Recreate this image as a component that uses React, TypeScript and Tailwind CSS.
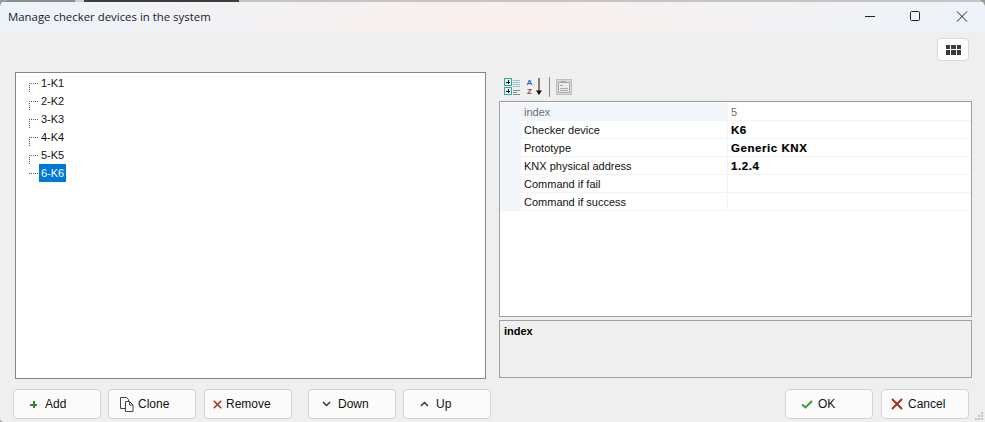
import type { ReactNode } from 'react';

const DEVICES = ['1-K1', '2-K2', '3-K3', '4-K4', '5-K5', '6-K6'];

const PROPS = [
  { name: 'index', value: '5', dim: true },
  { name: 'Checker device', value: 'K6' },
  { name: 'Prototype', value: 'Generic KNX' },
  { name: 'KNX physical address', value: '1.2.4' },
  { name: 'Command if fail', value: '' },
  { name: 'Command if success', value: '' },
];

function TreeLine({ last }: { last: boolean }) {
  return (
    <svg width="10" height="18" className="shrink-0" shapeRendering="crispEdges">
      <line x1="0.5" y1={9} x2="0.5" y2={last ? 9 : 18} stroke="#555" strokeDasharray="1 1" />
      <line x1="0" y1="9.5" x2="9" y2="9.5" stroke="#555" strokeDasharray="1 1" />
    </svg>
  );
}

function ActionButton({
  icon,
  label,
  className,
}: {
  icon: ReactNode;
  label: string;
  className: string;
}) {
  return (
    <button className={`flex h-[30px] w-[88px] shrink-0 items-center rounded-[4px] border border-[#d4d4d4] bg-[#fbfbfb] text-[12px] text-[#111] ${className}`}>
      {icon}
      <span>{label}</span>
    </button>
  );
}

function CrossIcon({ size }: { size: number }) {
  return (
    <svg width={size} height={size} viewBox="0 0 12 12">
      <path d="M1 1l10 10M11 1L1 11" stroke="#a5301c" strokeWidth="2" fill="none" />
    </svg>
  );
}

function CategoryIcon() {
  return (
    <svg width="17" height="18" viewBox="0 0 17 18" shapeRendering="crispEdges">
      <rect x="0.5" y="0.5" width="7" height="7" fill="#e8f7f5" stroke="#35a79c" />
      <rect x="0.5" y="9.5" width="7" height="7" fill="#e8f7f5" stroke="#35a79c" />
      <path d="M2 4h4M4 2v4M2 13h4M4 11v4" stroke="#111" fill="none" />
      <path d="M9 2h7M9 4h7M9 6h7M9 8h7" stroke="#8fc4d6" fill="none" />
      <path d="M9 12h7M9 14h4M9 16h7" stroke="#7f8f98" fill="none" />
    </svg>
  );
}

function SortIcon() {
  return (
    <svg width="18" height="19" viewBox="0 0 18 19" fontFamily="'Liberation Sans', sans-serif" fontWeight="700" fontSize="8">
      <text x="0.5" y="8" fill="#2a63c4">A</text>
      <text x="1" y="17" fill="#8a4a55">Z</text>
      <path d="M13 1v14" stroke="#111" strokeWidth="1" fill="none" />
      <path d="M10 13.500h6L13 18z" fill="#111" />
    </svg>
  );
}

function PagesIcon() {
  return (
    <svg width="16" height="16" viewBox="0 0 16 16" shapeRendering="crispEdges">
      <rect x="0.5" y="0.5" width="15" height="15" fill="#d9d9d9" stroke="#bdbdbd" />
      <rect x="2.5" y="3.5" width="11" height="10" fill="#ececec" stroke="#a8a8a8" />
      <path d="M4 6h3M4 9h8M4 11h8M5 2h5" stroke="#a8a8a8" fill="none" />
    </svg>
  );
}

export default function App() {
  return (
    <div className="h-[422px] w-[985px] bg-[#9a9a9a]">
      <div className="relative flex h-[422px] w-[985px] flex-col overflow-hidden rounded-t-[8px] rounded-bl-[4px] bg-[#efefef] font-['Liberation_Sans',sans-serif] text-[11px] text-[#111]">
        {/* top edge with what is behind the window */}
        <div className="flex h-[2px] shrink-0">
          <div className="w-[75px] bg-[#8c8c8c]" />
          <div className="w-[9px] bg-[#d0d0d0]" />
          <div className="w-[155px] bg-[#3d3d3d]" />
          <div className="flex-1 bg-[#c4c4c4]" />
        </div>

        <div className="flex h-[30px] shrink-0 items-center justify-between bg-gradient-to-r from-[#ecf3fa] via-[#f9efec] to-[#edf3f9] pl-[8px]">
          <span className="font-['Open_Sans',sans-serif] text-[11.4px] leading-none text-[#1a1a1a]">
            Manage checker devices in the system
          </span>
          <div className="flex items-center">
            <svg width="46" height="30" viewBox="0 0 46 30" className="shrink-0">
              <path d="M18 14.500h10" stroke="#222" fill="none" />
            </svg>
            <svg width="46" height="30" viewBox="0 0 46 30" className="shrink-0">
              <rect x="17.5" y="9.5" width="9" height="9" rx="1" stroke="#222" fill="none" />
            </svg>
            <svg width="46" height="30" viewBox="0 0 46 30" className="shrink-0">
              <path d="M18 9.500l10 10M28 9.500l-10 10" stroke="#222" fill="none" />
            </svg>
          </div>
        </div>

        <div className="flex h-[40px] shrink-0 justify-end pr-[16px] pt-[6px]">
          <button className="flex h-[23px] w-[32px] items-center justify-center rounded-[4px] border border-[#d8d8d8] bg-white">
            <svg width="15" height="10" viewBox="0 0 15 10" shapeRendering="crispEdges">
              <path d="M0 0h4v4H0zM5 0h5v4H5zM11 0h4v4h-4zM0 5h4v5H0zM5 5h5v5H5zM11 5h4v5h-4z" fill="#3a3a3a" />
            </svg>
          </button>
        </div>

        <div className="flex h-[307px] shrink-0 gap-[13px] pl-[15px]">
          <div className="h-full w-[471px] border border-[#85858c] bg-white pl-[13px] pt-[1px] text-[#111]">
            {DEVICES.map((d, i) => (
              <div key={d} className="flex h-[18px] items-center">
                <TreeLine last={i === DEVICES.length - 1} />
                <span className={`flex h-[18px] items-center px-[2px] ${i === 5 ? 'bg-[#0078d7] text-white' : ''}`}>
                  {d}
                </span>
              </div>
            ))}
          </div>

          <div className="flex h-full w-[473px] flex-col">
            <div className="flex h-[29px] shrink-0 items-center pl-[5px]">
              <CategoryIcon />
              <div className="ml-[5px]">
                <SortIcon />
              </div>
              <div className="ml-[5px] h-[20px] w-px bg-[#8a8a8a]" />
              <div className="ml-[6px]">
                <PagesIcon />
              </div>
            </div>

            <div className="h-[216px] shrink-0 border border-[#a0a0a0] bg-white pt-[1px]">
              {PROPS.map((p) => (
                <div key={p.name} className="flex h-[18px] border-b border-[#f0f3f8]">
                  <div className="w-[21px] shrink-0 bg-[#f2f6fb]" />
                  <div className={`flex w-[206px] shrink-0 items-center pl-[3px] pt-[2px] ${p.dim ? 'bg-[#f2f6fb] text-[#6d6d6d]' : ''}`}>
                    {p.name}
                  </div>
                  <div className={`flex flex-1 items-center border-l border-[#f0f3f8] pl-[3px] pt-[2px] ${p.dim ? 'text-[#6d6d6d]' : 'text-[11.5px] font-bold tracking-[0.55px] text-black [-webkit-text-stroke:0.2px_black]'}`}>
                    {p.value}
                  </div>
                </div>
              ))}
            </div>

            <div className="mt-[3px] h-[58px] shrink-0 border border-[#a0a0a0] bg-[#efefef] pl-[4px] pt-[3px] font-bold leading-[14px] text-black">
              index
            </div>
          </div>
        </div>

        <div className="flex flex-1 items-start pl-[13px] pt-[10px]">
          <ActionButton
            className="mr-[7px] pl-[16px]"
            label="Add"
            icon={
              <svg width="7" height="7" viewBox="0 0 7 7" className="mr-[8px]" shapeRendering="crispEdges">
                <path d="M3.500 0v7M0 3.500h7" stroke="#2f8a2f" strokeWidth="2" fill="none" />
              </svg>
            }
          />
          <ActionButton
            className="mr-[8px] pl-[11px]"
            label="Clone"
            icon={
              <svg width="14" height="15" viewBox="0 0 14 15" className="mr-[4px]" fill="none" stroke="#444">
                <path d="M5.500 11.500h-5v-11h6l2 2v2" />
                <path d="M5.500 4.500h4l3.500 3.500v6.500H5.500z" />
                <path d="M9.500 4.500v3.500H13" />
              </svg>
            }
          />
          <ActionButton
            className="mr-[16px] pl-[8px]"
            label="Remove"
            icon={
              <span className="mr-[4px] flex">
                <CrossIcon size={9} />
              </span>
            }
          />
          <ActionButton
            className="mr-[7px] pl-[13px]"
            label="Down"
            icon={
              <svg width="9" height="6" viewBox="0 0 9 6" className="mr-[7px]">
                <path d="M1 1l3.500 3.500L8 1" stroke="#333" strokeWidth="1.500" fill="none" />
              </svg>
            }
          />
          <ActionButton
            className="pl-[16px]"
            label="Up"
            icon={
              <svg width="9" height="6" viewBox="0 0 9 6" className="mr-[7px]">
                <path d="M1 5l3.500-3.500L8 5" stroke="#333" strokeWidth="1.500" fill="none" />
              </svg>
            }
          />
          <div className="flex-1" />
          <ActionButton
            className="mr-[8px] pl-[15px]"
            label="OK"
            icon={
              <svg width="12" height="9" viewBox="0 0 12 9" className="mr-[5px]">
                <path d="M1 4.500l3.500 3L11 1" stroke="#3b9a3b" strokeWidth="2" fill="none" />
              </svg>
            }
          />
          <ActionButton
            className="mr-[16px] pl-[9px]"
            label="Cancel"
            icon={
              <span className="mr-[5px] flex">
                <CrossIcon size={12} />
              </span>
            }
          />
        </div>

        {/* resize grip */}
        <svg width="9" height="9" viewBox="0 0 9 9" className="absolute bottom-[1px] right-[1px]" shapeRendering="crispEdges">
          <path d="M6 0h2v2H6zM3 3h2v2H3zM6 3h2v2H6zM0 6h2v2H0zM3 6h2v2H3zM6 6h2v2H6z" fill="#c4c4c4" />
        </svg>
      </div>
    </div>
  );
}
